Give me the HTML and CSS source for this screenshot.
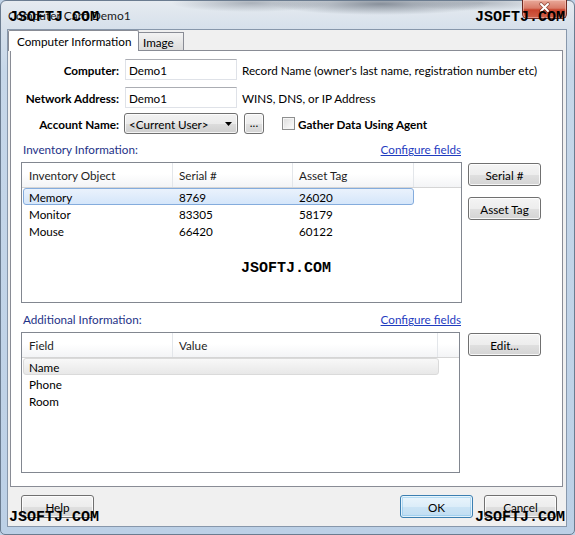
FILE: index.html
```html
<!DOCTYPE html>
<html>
<head>
<meta charset="utf-8">
<title>Computer Card Demo1</title>
<link rel="stylesheet" href="styles.css">
</head>
<body>
<div class="window">
  <div class="titlebar">
    <span class="title">Computer Card Demo1</span>
    <div class="close-btn">
      <svg width="45" height="19" viewBox="0 0 45 19">
        <path d="M19 4 L26 11 M26 4 L19 11" stroke="#5a1d14" stroke-width="3.6" stroke-linecap="round" opacity="0.55"/>
        <path d="M19 4 L26 11 M26 4 L19 11" stroke="#ffffff" stroke-width="2" stroke-linecap="round"/>
      </svg>
    </div>
  </div>
  <div class="client">
    <div class="tabs">
      <div class="tab active">Computer Information</div>
      <div class="tab">Image</div>
    </div>
    <div class="panel">
      <div class="form">
        <div class="frow r1">
          <span class="lbl">Computer:</span>
          <div class="input">Demo1</div>
          <span class="hint">Record Name (owner's last name, registration number etc)</span>
        </div>
        <div class="frow r2">
          <span class="lbl">Network Address:</span>
          <div class="input">Demo1</div>
          <span class="hint">WINS, DNS, or IP Address</span>
        </div>
        <div class="frow r3">
          <span class="lbl">Account Name:</span>
          <div class="combo">
            <span>&lt;Current User&gt;</span>
            <svg class="arrow" width="7" height="4" viewBox="0 0 7 4"><path d="M0 0 H7 L3.5 4 Z" fill="#000"/></svg>
          </div>
          <div class="btn dots">...</div>
          <span class="check"></span>
          <span class="check-label">Gather Data Using Agent</span>
        </div>
      </div>

      <div class="section s1">
        <div class="sec-head">
          <span class="sec-title">Inventory Information:</span>
          <span class="link">Configure fields</span>
        </div>
        <div class="list list-inv">
          <div class="lhead">
            <div class="hc w151">Inventory Object</div>
            <div class="hc w120">Serial #</div>
            <div class="hc w121">Asset Tag</div>
            <div class="hc fill"></div>
          </div>
          <div class="rows">
            <div class="row sel-blue"><span class="cell w150">Memory</span><span class="cell w120">8769</span><span class="cell">26020</span></div>
            <div class="row"><span class="cell w150">Monitor</span><span class="cell w120">83305</span><span class="cell">58179</span></div>
            <div class="row"><span class="cell w150">Mouse</span><span class="cell w120">66420</span><span class="cell">60122</span></div>
          </div>
        </div>
        <div class="side">
          <div class="btn">Serial #</div>
          <div class="btn">Asset Tag</div>
        </div>
      </div>

      <div class="section s2">
        <div class="sec-head">
          <span class="sec-title">Additional Information:</span>
          <span class="link">Configure fields</span>
        </div>
        <div class="list list-add">
          <div class="lhead">
            <div class="hc w151">Field</div>
            <div class="hc w265">Value</div>
            <div class="hc fill"></div>
          </div>
          <div class="rows">
            <div class="row sel-grey"><span class="cell w150">Name</span><span class="cell"></span></div>
            <div class="row"><span class="cell w150">Phone</span><span class="cell"></span></div>
            <div class="row"><span class="cell w150">Room</span><span class="cell"></span></div>
          </div>
        </div>
        <div class="side">
          <div class="btn">Edit...</div>
        </div>
      </div>
    </div>
    <div class="footer">
      <div class="btn">Help</div>
      <div class="spacer"></div>
      <div class="btn default">OK</div>
      <div class="btn">Cancel</div>
    </div>
  </div>

  <div class="wm wm-tl">JSOFTJ.COM</div>
  <div class="wm wm-tr">JSOFTJ.COM</div>
  <div class="wm wm-c">JSOFTJ.COM</div>
  <div class="wm wm-bl">JSOFTJ.COM</div>
  <div class="wm wm-br">JSOFTJ.COM</div>
</div>
</body>
</html>
```
FILE: styles.css
```css
* { box-sizing: border-box; margin: 0; padding: 0; }
html, body { width: 575px; height: 535px; overflow: hidden; }
body {
  font-family: Lato, "Open Sans", sans-serif;
  font-size: 11.7px;
  color: #000;
  background: #bfd2e6;
}

.window {
  position: relative;
  width: 575px;
  height: 535px;
  border: 1px solid #6b7c90;
  border-radius: 6px 6px 5px 5px;
  padding: 0 7px 7px 6px;
  display: flex;
  flex-direction: column;
  background:
    radial-gradient(ellipse 110px 11px at 380px 3px, rgba(60, 70, 85, 0.55), rgba(60, 70, 85, 0)),
    radial-gradient(ellipse 80px 9px at 250px 2px, rgba(60, 70, 85, 0.35), rgba(60, 70, 85, 0)),
    radial-gradient(ellipse 70px 8px at 480px 2px, rgba(60, 70, 85, 0.3), rgba(60, 70, 85, 0)),
    linear-gradient(180deg, #e6ebf0 0, #d6e0eb 28px, #c6d7e9 70px, #bcd0e6 100%);
}

.titlebar {
  height: 28px;
  display: flex;
  align-items: center;
}
.title {
  padding-left: 1px;
  font-size: 12px;
  color: #1a1a1a;
}
.close-btn {
  position: absolute;
  top: -1px;
  right: 7px;
  width: 45px;
  height: 19px;
  border: 1px solid #6e2a22;
  border-top: none;
  border-radius: 0 0 5px 5px;
  background: linear-gradient(180deg, #e9a99a 0%, #d97c69 45%, #c8432c 55%, #d0614a 100%);
  box-shadow: inset 0 0 0 1px rgba(255, 220, 210, 0.45);
}
.close-btn svg { display: block; position: absolute; left: -1px; top: 0; }

.client {
  flex: 1;
  border: 1px solid #8797ab;
  background: #f0f0f0;
  display: flex;
  flex-direction: column;
}

.tabs {
  height: 20px;
  display: flex;
  align-items: flex-end;
}
.tab {
  height: 18px;
  width: 46px;
  margin-left: -1px;
  padding-left: 4px;
  border: 1px solid #898c95;
  border-bottom: none;
  background: linear-gradient(180deg, #f3f3f3 0%, #e8e8e8 50%, #dcdcdc 100%);
  display: flex;
  align-items: center;
  white-space: nowrap;
}
.tab.active {
  position: relative;
  z-index: 2;
  margin-left: 0;
  width: 131px;
  height: 21px;
  margin-bottom: -1px;
  padding-left: 8px;
  background: #fff;
  border-radius: 2px 2px 0 0;
}

.panel {
  margin-left: 2px;
  margin-right: 3px;
  height: 437px;
  border: 1px solid #898c95;
  background: #fff;
  padding: 8px 0 0 10px;
}

/* form */
.frow {
  display: flex;
  align-items: center;
  height: 21px;
}
.r1 { margin-bottom: 7px; }
.r2 { margin-bottom: 5px; }
.lbl {
  width: 98px;
  text-align: right;
  font-weight: bold;
  white-space: nowrap;
}
.input {
  margin-left: 6px;
  width: 112px;
  height: 21px;
  border: 1px solid #dfe2e8;
  border-top-color: #abadb3;
  background: #fff;
  padding-left: 3px;
  display: flex;
  align-items: center;
}
.hint {
  margin-left: 5px;
  white-space: nowrap;
}
.combo {
  margin-left: 5px;
  width: 114px;
  height: 21px;
  border: 1px solid #707070;
  border-radius: 3px;
  background: linear-gradient(180deg, #f2f2f2 0%, #ebebeb 50%, #dddddd 51%, #cfcfcf 100%);
  box-shadow: inset 0 0 0 1px rgba(255, 255, 255, 0.75);
  display: flex;
  align-items: center;
  padding-left: 4px;
  padding-right: 5px;
  justify-content: space-between;
}
.combo .arrow { display: block; }

.btn {
  width: 73px;
  height: 23px;
  border: 1px solid #707070;
  border-radius: 3px;
  background: linear-gradient(180deg, #f4f4f4 0%, #ededed 50%, #e0e0e0 51%, #d4d4d4 100%);
  box-shadow: inset 0 0 0 1px rgba(255, 255, 255, 0.8);
  display: flex;
  align-items: center;
  justify-content: center;
  color: #000;
}
.btn.dots {
  width: 20px;
  height: 21px;
  margin-left: 6px;
  align-items: flex-end;
  padding-bottom: 4px;
  line-height: 1;
}
.check {
  margin-left: 18px;
  width: 13px;
  height: 13px;
  border: 1px solid #8e8f8f;
  background: linear-gradient(135deg, #dcdcdc 0%, #f4f4f4 70%, #ffffff 100%);
  box-shadow: inset 0 0 0 1px #f5f5f5;
}
.check-label {
  margin-left: 3px;
  font-weight: bold;
  white-space: nowrap;
}

/* sections */
.section {
  display: grid;
  grid-template-columns: 441px 73px;
  column-gap: 6px;
  row-gap: 5px;
}
.s1 { margin-top: 7px; }
.s2 { margin-top: 8px; }
.sec-head {
  height: 16px;
  display: flex;
  align-items: center;
  justify-content: space-between;
  padding-left: 2px;
  padding-right: 1px;
}
.sec-title { color: #1e3287; }
.link { color: #1f3cbf; text-decoration: underline; }

.list {
  grid-column: 1;
  grid-row: 2;
  height: 141px;
  border: 1px solid #828790;
  background: #fff;
  overflow: hidden;
}
.list-add { width: 439px; }
.side {
  grid-column: 2;
  grid-row: 2;
  padding-top: 1px;
  display: flex;
  flex-direction: column;
  gap: 11px;
}

.lhead {
  height: 25px;
  display: flex;
  background: linear-gradient(180deg, #ffffff 0%, #ffffff 45%, #f3f4f6 100%);
  border-bottom: 1px solid #d5d5d5;
}
.hc {
  border-right: 1px solid #e3e6ea;
  padding-left: 6px;
  display: flex;
  align-items: center;
  color: #1e1e1e;
  white-space: nowrap;
}
.lhead .hc:first-child { padding-left: 7px; }
.hc.fill { flex: 1; border-right: none; }
.w151 { width: 151px; }
.w120 { width: 120px; }
.w121 { width: 121px; }
.w265 { width: 265px; }
.w150 { width: 150px; }

.rows { padding: 0 1px; }
.list-inv .row { width: 391px; }
.list-add .row { width: 416px; }
.row {
  height: 17px;
  display: flex;
  align-items: center;
  border: 1px solid transparent;
  border-radius: 3px;
}
.cell {
  padding-left: 5px;
  white-space: nowrap;
}
.row.sel-blue {
  border-color: #84acdd;
  background: linear-gradient(180deg, #eaf2fc 0%, #d5e6fa 100%);
}
.row.sel-grey {
  border-color: #dadada;
  background: linear-gradient(180deg, #f8f8f8 0%, #e8e8e8 100%);
}

.footer {
  display: flex;
  padding: 8px 9px 0 13px;
}
.spacer { flex: 1; }
.btn.default {
  margin-right: 11px;
  border-color: #3c7fb1;
  background: linear-gradient(180deg, #eaf5fc 0%, #dcedf9 50%, #cbe4f5 51%, #c0ddf2 100%);
  box-shadow: inset 0 0 0 1px rgba(255, 255, 255, 0.7), inset 0 0 0 2px rgba(120, 190, 235, 0.45);
}

/* watermark overlay */
.wm {
  position: absolute;
  font-family: "Liberation Mono", "DejaVu Sans Mono", monospace;
  font-weight: bold;
  font-size: 15px;
  line-height: 15px;
  color: #000;
  white-space: nowrap;
  z-index: 5;
}
.wm-tl { left: 8px; top: 9px; }
.wm-tr { left: 474px; top: 9px; }
.wm-c { left: 240px; top: 260px; }
.wm-bl { left: 8px; top: 509px; }
.wm-br { left: 474px; top: 509px; }
```
